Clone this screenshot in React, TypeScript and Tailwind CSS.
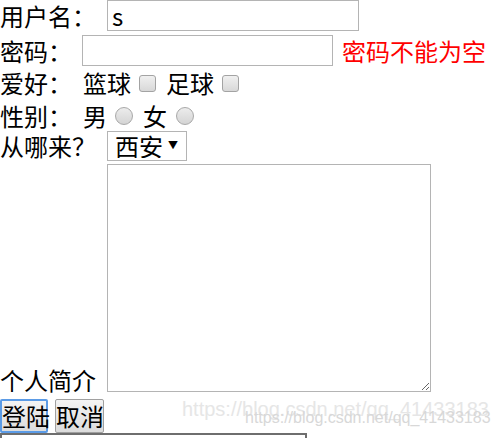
import React from "react";

const font = { fontFamily: '"Microsoft YaHei", "Noto Sans CJK SC", "Noto Sans", sans-serif' };

function Check() {
  return (
    <input
      type="checkbox"
      className="appearance-none w-[17px] h-[17px] rounded-[3px] border border-[#a3a3a3] bg-gradient-to-b from-[#f0f0f0] to-[#d8d8d8]"
    />
  );
}

function Radio() {
  return (
    <input
      type="radio"
      name="sex"
      className="appearance-none w-[18px] h-[18px] rounded-full border border-[#a8a8a8] bg-gradient-to-b from-[#ececec] to-[#d4d4d4]"
    />
  );
}

export default function App() {
  return (
    <div className="relative w-[498px] h-[438px] overflow-hidden bg-white text-black text-[24px] leading-none" style={font}>
      <form className="flex flex-col">
        {/* 用户名 */}
        <div className="flex items-center h-[31px]">
          <span className="w-[107px] shrink-0 whitespace-nowrap">用户名：</span>
          <input
            defaultValue="s"
            className="w-[252px] h-[31px] border border-[#b4b4b4] px-[4px] text-[24px] outline-none"
            style={font}
          />
        </div>

        {/* 密码 */}
        <div className="flex items-center h-[31px] mt-[4px]">
          <span className="w-[82px] shrink-0 whitespace-nowrap">密码：</span>
          <input type="password" className="w-[251px] h-[31px] border border-[#b4b4b4] outline-none" />
          <span className="ml-[9px] text-[#ff0000] whitespace-nowrap">密码不能为空</span>
        </div>

        {/* 爱好 */}
        <div className="flex items-center h-[34px]">
          <span className="w-[83px] shrink-0 whitespace-nowrap">爱好：</span>
          <span>篮球</span>
          <span className="ml-[8px] flex"><Check /></span>
          <span className="ml-[10px]">足球</span>
          <span className="ml-[8px] flex"><Check /></span>
        </div>

        {/* 性别 */}
        <div className="flex items-center h-[31px]">
          <span className="w-[83px] shrink-0 whitespace-nowrap">性别：</span>
          <span>男</span>
          <span className="ml-[8px] flex"><Radio /></span>
          <span className="ml-[10px]">女</span>
          <span className="ml-[9px] flex"><Radio /></span>
        </div>

        {/* 从哪来 */}
        <div className="flex items-center h-[30px]">
          <span className="w-[107px] shrink-0 whitespace-nowrap">从哪来？</span>
          <div className="relative">
            <select
              className="appearance-none w-[80px] h-[30px] border border-[#b4b4b4] pl-[7px] text-[24px] leading-none bg-white outline-none"
              style={font}
            >
              <option>西安</option>
              <option>北京</option>
              <option>上海</option>
            </select>
            <span className="pointer-events-none absolute right-[9px] top-[9px] text-[10px]">▼</span>
          </div>
        </div>

        {/* 个人简介 */}
        <div className="flex items-end mt-[3px]">
          <span className="w-[107px] shrink-0 whitespace-nowrap">个人简介</span>
          <textarea className="w-[324px] h-[228px] border border-[#b4b4b4] outline-none" />
        </div>

        {/* 按钮 */}
        <div className="flex mt-[7px]">
          <button
            type="button"
            className="w-[48px] h-[34px] p-0 whitespace-nowrap border-2 border-[#5b9be6] rounded-[2px] bg-gradient-to-b from-[#f4f4f4] to-[#dcdcdc] text-[24px] leading-none"
            style={font}
          >
            登陆
          </button>
          <button
            type="button"
            className="ml-[7px] w-[49px] h-[34px] p-0 whitespace-nowrap border border-[#a0a0a0] rounded-[2px] bg-gradient-to-b from-[#f4f4f4] to-[#dcdcdc] text-[24px] leading-none"
            style={font}
          >
            取消
          </button>
        </div>

        <div className="w-[307px] h-[10px] border-t-[2px] border-x-[2px] border-[#6e6e6e]" />
      </form>

      {/* watermark */}
      <span
        className="absolute left-[182px] top-[399px] text-[20px] text-[#e6e6e6] whitespace-nowrap pointer-events-none"
        style={{ fontFamily: '"Liberation Sans", Arial, sans-serif' }}
      >
        https://blog.csdn.net/qq_41433183
      </span>
      <span
        className="absolute left-[245px] top-[410px] text-[16px] text-[#d8d8d8] whitespace-nowrap pointer-events-none"
        style={{ fontFamily: '"Liberation Sans", Arial, sans-serif' }}
      >
        https://blog.csdn.net/qq_41433183
      </span>
    </div>
  );
}
